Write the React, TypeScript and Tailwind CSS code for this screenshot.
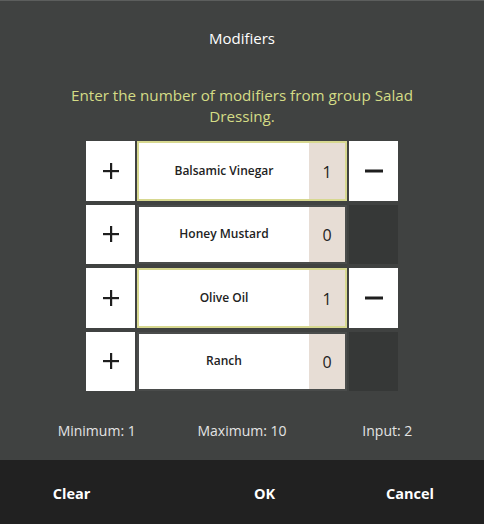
import React from "react";

const rows = [
  { name: "Balsamic Vinegar", count: 1, selected: true },
  { name: "Honey Mustard", count: 0, selected: false },
  { name: "Olive Oil", count: 1, selected: true },
  { name: "Ranch", count: 0, selected: false },
];

function Plus() {
  return (
    <svg width="18" height="18" viewBox="0 0 18 18">
      <rect x="8" y="1" width="2.2" height="16" fill="#1e1e1e" />
      <rect x="1" y="8" width="16" height="2.2" fill="#1e1e1e" />
    </svg>
  );
}

function Minus() {
  return (
    <svg width="20" height="4" viewBox="0 0 20 4">
      <rect x="1" y="0.5" width="18" height="3" fill="#1e1e1e" />
    </svg>
  );
}

export default function App() {
  return (
    <div
      className="w-[484px] h-[524px] flex flex-col bg-[#404241] border-t border-[#5c5e5d]"
      style={{ fontFamily: "'Open Sans', 'Noto Sans', sans-serif" }}
    >
      <div className="flex-1 flex flex-col items-center">
        <div className="mt-[26px] text-[15px] leading-[22px] text-white">Modifiers</div>
        <div className="mt-[36px] w-[370px] text-center text-[15.2px] leading-[21px] text-[#d4dc86]">
          Enter the number of modifiers from group Salad Dressing.
        </div>
        <div className="mt-[14px] grid grid-cols-[49px_210px_49px] gap-x-[2px] gap-y-[4px]">
          {rows.map((r) => (
            <React.Fragment key={r.name}>
              <div className="h-[59.5px] bg-white flex items-center justify-center">
                <Plus />
              </div>
              <div
                className={`h-[59.5px] flex border-2 ${
                  r.selected ? "border-[#d7d890]" : "border-[#4a4c4b]"
                }`}
              >
                <div className="flex-1 bg-white flex items-center justify-center text-[12px] font-semibold text-[#222]">
                  {r.name}
                </div>
                <div className="w-[36px] bg-[#e7ddd5] flex items-center justify-center text-[16px] text-[#222] pt-[2px]">
                  {r.count}
                </div>
              </div>
              {r.selected ? (
                <div className="h-[59.5px] bg-white flex items-center justify-center">
                  <Minus />
                </div>
              ) : (
                <div className="h-[59.5px] bg-[#363837]" />
              )}
            </React.Fragment>
          ))}
        </div>
        <div className="mt-[29px] w-full px-[24px] grid grid-cols-3 text-[14px] text-[#e4e4e4]">
          <div className="text-center">Minimum: 1</div>
          <div className="text-center">Maximum: 10</div>
          <div className="text-center">Input: 2</div>
        </div>
      </div>
      <div className="h-[64px] bg-[#212121] flex items-center pt-[3px] text-[14.5px] font-bold text-white">
        <div className="w-[144px] text-center">Clear</div>
        <div className="w-[244px] text-center">OK</div>
        <div className="flex-1 text-center pr-[50px]">Cancel</div>
      </div>
    </div>
  );
}
